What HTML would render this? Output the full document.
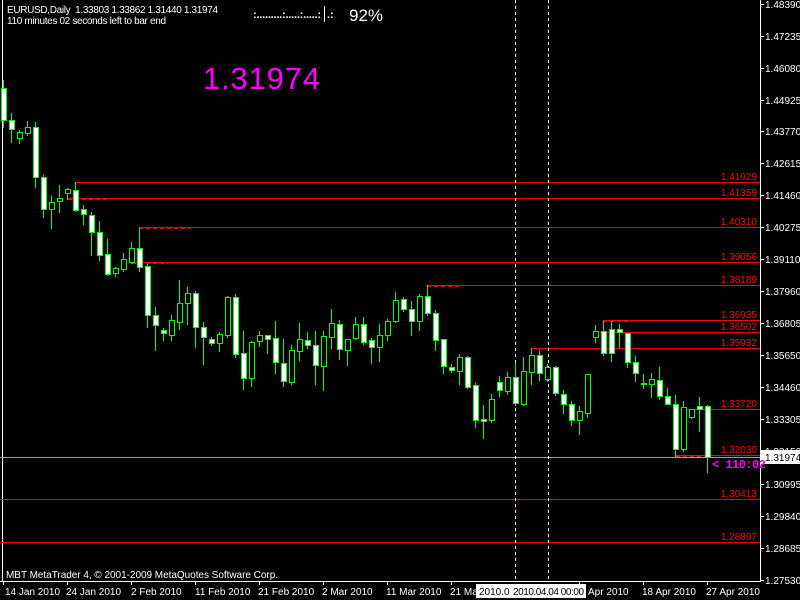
<!DOCTYPE html>
<html><head><meta charset="utf-8"><style>
html,body{margin:0;padding:0;background:#000;width:800px;height:600px;overflow:hidden}
svg{display:block;font-family:"Liberation Sans",sans-serif}
</style></head><body>
<svg id="s" width="800" height="600" xmlns="http://www.w3.org/2000/svg">
<rect width="800" height="600" fill="#000"/>
<line x1="2.5" y1="0" x2="2.5" y2="581" stroke="#fff"/>
<g id="lines" stroke="#ff0000" stroke-width="1">
<line x1="76" y1="182.5" x2="760" y2="182.5"/>
<line x1="68" y1="198.5" x2="760" y2="198.5"/>
<line x1="68" y1="199.5" x2="110" y2="199.5" stroke-dasharray="4,3"/>
<line x1="139" y1="227.5" x2="760" y2="227.5"/>
<line x1="139" y1="228.5" x2="190" y2="228.5" stroke-dasharray="4,3"/>
<line x1="132" y1="262.5" x2="760" y2="262.5"/>
<line x1="132" y1="263.5" x2="168" y2="263.5" stroke-dasharray="4,3"/>
<line x1="427" y1="285.5" x2="760" y2="285.5"/>
<line x1="427" y1="286.5" x2="460" y2="286.5" stroke-dasharray="4,3"/>
<line x1="603" y1="320.5" x2="760" y2="320.5"/>
<line x1="603" y1="321.5" x2="630" y2="321.5" stroke-dasharray="4,3"/>
<line x1="600" y1="332.5" x2="760" y2="332.5"/>
<line x1="531" y1="348.5" x2="760" y2="348.5"/>
<line x1="680" y1="409.5" x2="760" y2="409.5"/>
<line x1="676" y1="455.5" x2="760" y2="455.5"/>
<line x1="676" y1="456.5" x2="706" y2="456.5" stroke-dasharray="4,3"/>
<line x1="0" y1="499.5" x2="760" y2="499.5"/>
<line x1="0" y1="542.5" x2="760" y2="542.5"/>
</g>
<line x1="0" y1="457.5" x2="760" y2="457.5" stroke="#a0a0a0"/>
<line x1="515.5" y1="0" x2="515.5" y2="581" stroke="#fff" stroke-dasharray="3,3"/>
<line x1="548.5" y1="0" x2="548.5" y2="581" stroke="#fff" stroke-dasharray="3,3"/>
<g id="c"></g>
<g fill="#ff0000" font-size="10" text-anchor="end">
<text x="757" y="180">1.41929</text>
<text x="757" y="196">1.41359</text>
<text x="757" y="225">1.40310</text>
<text x="757" y="260">1.39056</text>
<text x="757" y="283">1.38189</text>
<text x="757" y="318">1.36935</text>
<text x="757" y="330">1.36502</text>
<text x="757" y="346">1.35932</text>
<text x="757" y="407">1.33720</text>
<text x="757" y="453">1.32030</text>
<text x="757" y="497">1.30413</text>
<text x="757" y="540">1.28897</text>
</g>
<line x1="760.5" y1="0" x2="760.5" y2="582" stroke="#fff"/>
<line x1="0" y1="581.5" x2="761" y2="581.5" stroke="#fff"/>
<g fill="#fff" font-size="10" id="ax">
<text x="765" y="8">1.48390</text>
<text x="765" y="40">1.47235</text>
<text x="765" y="72">1.46080</text>
<text x="765" y="104">1.44925</text>
<text x="765" y="135">1.43770</text>
<text x="765" y="167">1.42615</text>
<text x="765" y="199">1.41460</text>
<text x="765" y="231">1.40275</text>
<text x="765" y="263">1.39110</text>
<text x="765" y="295">1.37960</text>
<text x="765" y="327">1.36805</text>
<text x="765" y="359">1.35650</text>
<text x="765" y="391">1.34460</text>
<text x="765" y="423">1.33305</text>
<text x="765" y="455">1.32150</text>
<text x="765" y="488">1.30995</text>
<text x="765" y="520">1.29840</text>
<text x="765" y="552">1.28685</text>
<text x="765" y="584">1.27530</text>
</g>
<g stroke="#fff">
<line x1="760" y1="4.5" x2="764" y2="4.5"/><line x1="760" y1="36.5" x2="764" y2="36.5"/><line x1="760" y1="68.5" x2="764" y2="68.5"/><line x1="760" y1="100.5" x2="764" y2="100.5"/><line x1="760" y1="131.5" x2="764" y2="131.5"/><line x1="760" y1="163.5" x2="764" y2="163.5"/><line x1="760" y1="195.5" x2="764" y2="195.5"/><line x1="760" y1="227.5" x2="764" y2="227.5"/><line x1="760" y1="259.5" x2="764" y2="259.5"/><line x1="760" y1="291.5" x2="764" y2="291.5"/><line x1="760" y1="323.5" x2="764" y2="323.5"/><line x1="760" y1="355.5" x2="764" y2="355.5"/><line x1="760" y1="387.5" x2="764" y2="387.5"/><line x1="760" y1="419.5" x2="764" y2="419.5"/><line x1="760" y1="451.5" x2="764" y2="451.5"/><line x1="760" y1="484.5" x2="764" y2="484.5"/><line x1="760" y1="516.5" x2="764" y2="516.5"/><line x1="760" y1="548.5" x2="764" y2="548.5"/><line x1="760" y1="580.5" x2="764" y2="580.5"/>
</g>
<rect x="761" y="450" width="39" height="14" fill="#fff"/>
<text x="765" y="461" font-size="10" fill="#000">1.31974</text>
<g stroke="#fff">
<line x1="3.5" y1="581" x2="3.5" y2="585"/><line x1="67.5" y1="581" x2="67.5" y2="585"/><line x1="131.5" y1="581" x2="131.5" y2="585"/><line x1="195.5" y1="581" x2="195.5" y2="585"/><line x1="259.5" y1="581" x2="259.5" y2="585"/><line x1="323.5" y1="581" x2="323.5" y2="585"/><line x1="387.5" y1="581" x2="387.5" y2="585"/><line x1="451.5" y1="581" x2="451.5" y2="585"/><line x1="579.5" y1="581" x2="579.5" y2="585"/><line x1="643.5" y1="581" x2="643.5" y2="585"/><line x1="707.5" y1="581" x2="707.5" y2="585"/>
</g>
<g fill="#fff" font-size="10">
<text x="5" y="595">14 Jan 2010</text>
<text x="66" y="595">24 Jan 2010</text>
<text x="131" y="595">2 Feb 2010</text>
<text x="195" y="595">11 Feb 2010</text>
<text x="258" y="595">21 Feb 2010</text>
<text x="322" y="595">2 Mar 2010</text>
<text x="386" y="595">11 Mar 2010</text>
<text x="450" y="595">21 Ma</text>
<text x="588" y="595">Apr 2010</text>
<text x="642" y="595">18 Apr 2010</text>
<text x="706" y="595">27 Apr 2010</text>
</g>
<rect x="476" y="584" width="110" height="14" fill="#fff"/>
<g fill="#000" font-size="10">
<text x="479" y="595">2010.0</text>
<text x="513" y="595" textLength="71">2010.04.04 00:00</text>
</g>
<g fill="#fff" font-size="10">
<text x="7" y="13" textLength="211" xml:space="preserve">EURUSD,Daily  1.33803 1.33862 1.31440 1.31974</text>
<text x="7" y="24" textLength="159">110 minutes 02 seconds left to bar end</text>
<text x="6" y="578" textLength="272">MBT MetaTrader 4, © 2001-2009 MetaQuotes Software Corp.</text>
<text x="253" y="18" font-size="11" font-weight="bold" textLength="68">:.........:.....:.....:</text>
<text x="327" y="18" font-size="11" font-weight="bold">.:</text>
<text x="349" y="21" font-size="17">92%</text>
</g>
<line x1="324.5" y1="6" x2="324.5" y2="22" stroke="#fff"/>
<text x="203" y="89" font-size="31" fill="#ff00ff" textLength="117">1.31974</text>
<text x="712" y="468" font-size="12" font-weight="bold" fill="#ff00ff" font-family="Liberation Mono,monospace" textLength="54">&lt; 110:02</text>
</svg>
<script>
var d=[[3,80,128,88,120,1],[11,113,143,120,129,1],[19,130,144,132,138,0],[27,121,136,127,133,0],[35,122,188,127,177,1],[43,175,218,177,209,1],[51,196,229,202,209,0],[59,185,213,198,201,0],[67,188,200,189,193,0],[75,182,212,190,210,1],[83,205,225,209,214,1],[91,212,256,215,232,1],[99,221,261,232,255,1],[107,239,276,254,274,1],[115,267,277,268,273,0],[123,253,272,259,269,0],[131,242,264,248,262,0],[139,228,272,248,267,1],[147,264,328,266,315,1],[155,307,351,315,325,1],[163,328,341,330,333,1],[171,315,341,320,335,0],[179,280,330,303,322,0],[187,287,325,293,303,0],[195,291,348,293,327,1],[203,322,365,327,337,1],[211,337,346,339,343,1],[219,332,352,334,343,0],[227,296,338,297,335,0],[235,294,358,297,354,1],[243,331,390,353,378,1],[251,341,387,342,378,0],[259,331,347,335,341,0],[267,335,354,335,339,1],[275,321,374,338,362,1],[283,339,387,363,381,1],[291,345,385,350,382,0],[299,323,361,339,351,0],[307,332,349,340,345,1],[315,331,385,345,365,1],[323,331,391,336,366,0],[331,309,349,323,337,0],[339,320,360,324,349,1],[347,339,366,339,350,0],[355,317,340,324,338,0],[363,317,345,324,342,1],[371,338,364,340,347,1],[379,324,362,335,347,0],[387,319,341,321,335,0],[395,292,323,300,321,0],[403,297,312,299,309,1],[411,301,336,309,321,1],[419,294,331,296,321,0],[427,285,316,296,313,1],[435,310,351,313,340,1],[443,339,374,339,366,1],[451,364,373,367,370,1],[459,354,385,357,371,0],[467,356,389,357,387,1],[475,383,428,385,420,1],[483,405,439,419,421,1],[491,394,423,399,420,0],[499,376,397,382,390,1],[507,372,395,377,391,0],[515,363,406,377,403,1],[523,357,406,371,404,0],[531,348,385,355,372,0],[539,351,381,355,373,1],[547,364,382,367,379,0],[555,366,396,367,393,1],[563,390,414,394,404,1],[571,401,426,404,420,1],[579,406,435,411,420,0],[587,374,418,374,413,0],[595,325,343,331,337,0],[603,321,356,331,353,1],[611,321,362,329,353,1],[619,324,348,329,332,1],[627,333,368,333,362,1],[635,356,382,362,373,1],[643,374,389,383,384,1],[651,373,398,379,384,0],[659,367,400,380,396,1],[667,388,405,396,404,1],[675,395,457,404,449,1],[683,401,452,407,449,0],[691,409,419,409,417,0],[699,397,432,406,409,1],[707,405,473,406,457,1]];
var g=document.getElementById('c'),h='';
d.forEach(function(c){var x=c[0];h+='<line x1="'+(x+.5)+'" y1="'+c[1]+'" x2="'+(x+.5)+'" y2="'+c[2]+'" stroke="#00ff00"/>';var hh=Math.max(c[4]-c[3],1);h+='<rect x="'+(x-2+.5)+'" y="'+(c[3]+.5)+'" width="5" height="'+hh+'" fill="'+(c[5]?'#fff':'#000')+'" stroke="#00ff00"/>';});
g.innerHTML=h;
</script>
</body></html>
